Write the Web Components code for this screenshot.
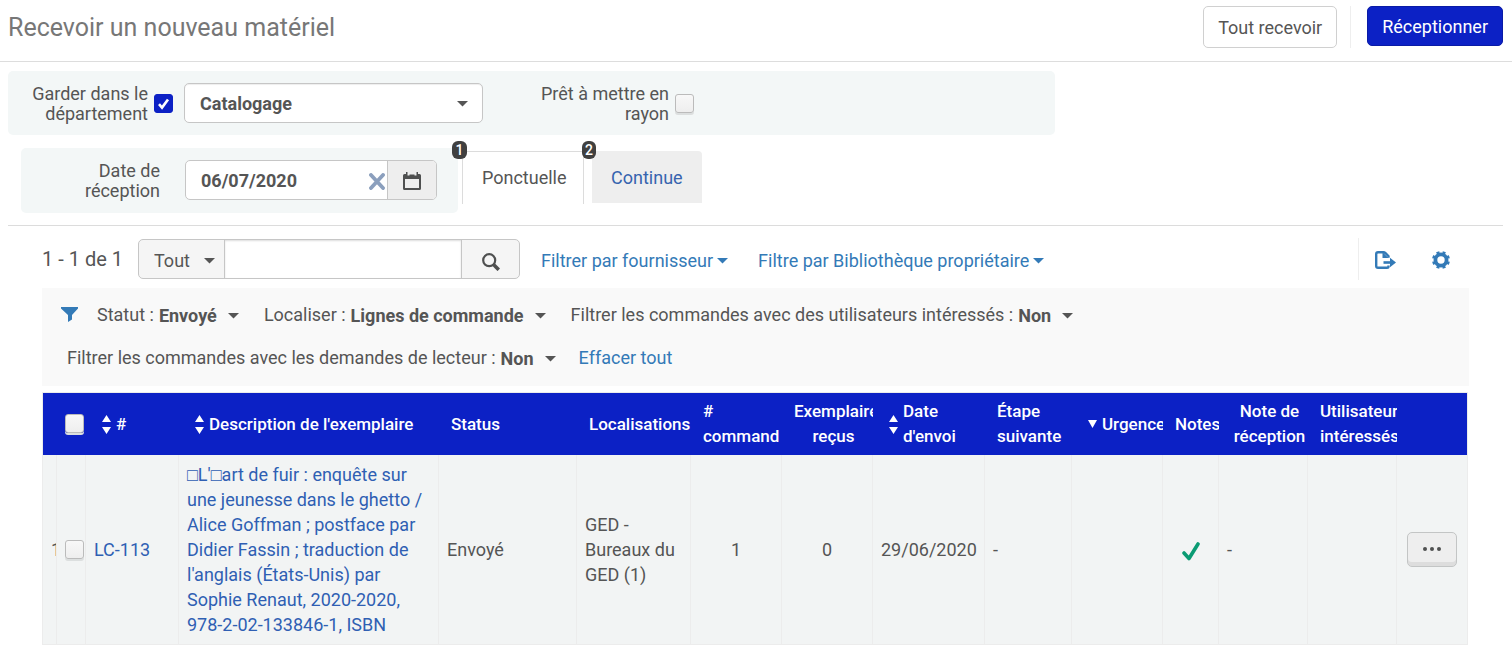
<!DOCTYPE html>
<html lang="fr">
<head>
<meta charset="utf-8">
<meta name="viewport" content="width=device-width, initial-scale=1">
<title>Recevoir un nouveau matériel</title>
<style>
  :root {
    --ink: #555;
    --blue: #0c21c5;
    --link: #337ab7;
    --row-link: #2f5fb3;
    --line: #dcdcdc;
    --field-line: #c6c6c6;
    --panel: #f3f7f7;
  }
  body {
    margin: 0;
    background: #fff;
    color: var(--ink);
    font: 400 18px/20px Roboto, "Liberation Sans", sans-serif;
  }
</style>
</head>
<body>
<receive-page></receive-page>

<script>
const base = `
  *, *::before, *::after { box-sizing: border-box; }
  button, input, select { font: inherit; color: inherit; margin: 0; }
  button, select { cursor: pointer; }
  a { color: var(--link); text-decoration: none; }
  svg { display: block; }
`;

function define(name, css, html) {
  const template = document.createElement('template');
  template.innerHTML = `<style>${base}${css}</style>${html}`;
  customElements.define(name, class extends HTMLElement {
    constructor() {
      super();
      const root = this.attachShadow({ mode: 'open' });
      root.append(template.content.cloneNode(true));
      root.querySelectorAll('[data-text]').forEach(el => {
        el.textContent = this.getAttribute(el.dataset.text) || '';
      });
      const box = root.querySelector('input[type=checkbox]');
      if (box) {
        box.checked = this.hasAttribute('checked');
        if (this.hasAttribute('name')) box.setAttribute('aria-label', this.getAttribute('name'));
      }
    }
  });
}

const checkCss = `
  input[type=checkbox] {
    appearance: none; flex: none; display: block; width: 19px; height: 19px;
    border: 1px solid #bbb; border-radius: 3px;
    background: linear-gradient(#f8f8f8, #eee);
    box-shadow: 0 2px 0 #dcdfdf;
  }
  input[type=checkbox]:checked {
    border-color: var(--blue); box-shadow: none;
    background: var(--blue) url("data:image/svg+xml,%3Csvg xmlns='http://www.w3.org/2000/svg' viewBox='0 0 17 17'%3E%3Cpath d='M4 9.2 7 12.6 13 4.4' fill='none' stroke='white' stroke-width='2.6'/%3E%3C/svg%3E") center / 17px no-repeat;
  }
`;

define('caret-down', `
  :host { display: block; flex: none; width: 11px; height: 6px; }
  svg { width: 11px; height: 6px; fill: currentColor; }
`, `<svg viewBox="0 0 11 6" aria-hidden="true"><path d="M0 0h11L5.500 5.500z"/></svg>`);

define('sort-arrows', `
  :host { display: block; flex: none; width: 9px; }
  svg { width: 9px; fill: #fff; }
  .down { display: none; }
  :host([down]) .down { display: block; }
  :host([down]) .both { display: none; }
`, `
  <svg class="both" height="19" viewBox="0 0 9 19" aria-hidden="true"><path d="M0 7 4.500 0 9 7zM0 12h9l-4.500 7z"/></svg>
  <svg class="down" height="8" viewBox="0 0 9 8" aria-hidden="true"><path d="M0 0h9L4.500 8z"/></svg>
`);

define('check-box', `:host { display: block; width: 19px; } ${checkCss}`, `<input type="checkbox">`);

define('check-field', `
  :host { display: flex; align-items: center; gap: 6px; }
  label { flex: 1; padding-top: 2px; text-align: right; }
  ${checkCss}
`, `<label for="box" data-text="label"></label><input type="checkbox" id="box">`);

define('page-header', `
  :host { display: flex; justify-content: space-between; padding: 6px 9px 11px 8px; border-bottom: 1px solid #ddd; }
  h1 { margin: 0; font-size: 25px; font-weight: 400; line-height: 44px; color: #777; }
  .actions { display: flex; align-items: flex-start; }
  button { height: 42px; padding: 2px 14px 0; border: 1px solid #d0d0d0; border-radius: 5px; background: #fff; }
  .primary { height: 40px; color: #fff; background: var(--blue); border-color: #0a1ba6; }
  .rule { width: 1px; height: 42px; margin: 0 16px 0 13px; background: #eee; }
`, `
  <h1>Recevoir un nouveau matériel</h1>
  <div class="actions">
    <button type="button">Tout recevoir</button>
    <span class="rule"></span>
    <button type="button" class="primary">Réceptionner</button>
  </div>
`);

define('department-panel', `
  :host { display: flex; align-items: center; width: 70%; height: 64px; padding-left: 20px; background: var(--panel); border-radius: 5px; }
  .keep { width: 145px; }
  .shelf { width: 155px; margin-left: 56px; }
  .pick { position: relative; width: 299px; margin-left: 11px; }
  select {
    appearance: none; display: block; width: 100%; height: 40px; padding: 2px 40px 0 15px; font-weight: 700;
    border: 1px solid var(--field-line); border-radius: 5px; background: #fff;
    box-shadow: inset 0 1px 1px #eee;
  }
  caret-down { position: absolute; right: 15px; top: 18px; pointer-events: none; }
`, `
  <check-field class="keep" label="Garder dans le département" checked></check-field>
  <div class="pick">
    <select aria-label="Département"><option>Catalogage</option></select>
    <caret-down></caret-down>
  </div>
  <check-field class="shelf" label="Prêt à mettre en rayon"></check-field>
`);

define('date-panel', `
  :host { display: flex; align-items: center; width: 437px; height: 65px; padding-bottom: 1px; background: var(--panel); border-radius: 5px; }
  label { width: 80px; margin-left: 59px; padding-top: 2px; text-align: right; }
  .group { display: flex; width: 252px; height: 40px; margin-left: 25px; border: 1px solid var(--field-line); border-radius: 5px; background: #fff; overflow: hidden; }
  input { flex: 1; min-width: 0; padding: 2px 0 0 15px; border: 0; background: none; font-weight: 700; }
  button { display: grid; place-items: center; padding: 0; border: 0; background: none; }
  .clear { width: 20px; padding-top: 2px; }
  .calendar { width: 49px; padding-top: 2px; background: #eee; border-left: 1px solid var(--field-line); }
`, `
  <label for="date">Date de réception</label>
  <div class="group">
    <input id="date" type="text" value="06/07/2020">
    <button type="button" class="clear" aria-label="Effacer la date">
      <svg width="16" height="17" viewBox="0 0 16 17"><path d="M2 2 14 15M14 2 2 15" stroke="#8b9fbd" stroke-width="3.800" stroke-linecap="round"/></svg>
    </button>
    <button type="button" class="calendar" aria-label="Choisir une date">
      <svg width="18" height="18" viewBox="0 0 18 18" fill="#4f5050"><path d="M0 3.500Q0 2 1.500 2H3V0h1.500v3.500h2V1h5v2.500h2V0H15v2h1.500Q18 2 18 3.500v13q0 1.500-1.500 1.500h-15Q0 18 0 16.500zM2 7v9h14V7z"/><path d="M6 0h6v2.500H6z" fill="#eee"/></svg>
    </button>
  </div>
`);

define('mode-tabs', `
  :host { display: flex; align-items: flex-start; gap: 8px; }
  a { position: relative; display: flex; align-items: center; height: 53px; padding: 0 19px; }
  .current { width: 122px; color: var(--ink); border: 1px solid var(--line); border-bottom: 0; }
  .other { height: 52px; padding-top: 2px; background: #eee; border-radius: 4px 4px 0 0; color: #3764ae; }
  .badge { position: absolute; left: -10px; top: -10px; width: 14px; height: 18px; border-radius: 6px; background: #404040; color: #fff; font-size: 14px; font-weight: 500; line-height: 18px; text-align: center; }
  .current .badge { width: 15px; left: -11px; top: -11px; }
`, `
  <a class="current" href="#ponctuelle"><span class="badge">1</span>Ponctuelle</a>
  <a class="other" href="#continue"><span class="badge">2</span>Continue</a>
`);

define('list-toolbar', `
  :host { display: flex; align-items: center; }
  .count { font-size: 20px; width: 96px; }
  .search { display: flex; width: 382px; height: 40px; border: 1px solid var(--field-line); border-radius: 5px; overflow: hidden; background: #f5f5f5; }
  .scope { position: relative; width: 86px; border-right: 1px solid var(--field-line); }
  select { appearance: none; width: 100%; height: 100%; padding: 4px 0 0 15px; border: 0; background: none; }
  .scope caret-down { position: absolute; right: 9px; top: 18px; pointer-events: none; }
  input { flex: 1; min-width: 0; border: 0; background: #fff; box-shadow: inset 0 1px 2px #ddd; }
  .go { display: grid; place-items: center; width: 58px; padding: 5px 0 0; border: 0; border-left: 1px solid var(--field-line); background: none; }
  .menu { display: flex; align-items: center; gap: 4px; margin-left: 21px; padding-top: 3px; }
  .menu + .menu { margin-left: 31px; }
  .menu caret-down { width: 10px; }
  .tools { display: flex; align-items: center; height: 42px; margin-left: auto; padding: 2px 0 0 16px; border-left: 1px solid #eee; }
  .tools a { margin-right: 19px; }
  .tools a:first-child { margin-right: 36px; }
`, `
  <span class="count">1 - 1 de 1</span>
  <div class="search">
    <div class="scope"><select aria-label="Champ de recherche"><option>Tout</option></select><caret-down></caret-down></div>
    <input type="text" aria-label="Rechercher">
    <button type="button" class="go" aria-label="Lancer la recherche">
      <svg width="18" height="18" viewBox="0 0 18 18" fill="none" stroke="#4f5050"><circle cx="7.200" cy="7.200" r="6" stroke-width="2.200"/><path d="m11.500 11.500 5.300 5.300" stroke-width="3.600"/></svg>
    </button>
  </div>
  <a class="menu" href="#fournisseur">Filtrer par fournisseur<caret-down></caret-down></a>
  <a class="menu" href="#bibliotheque">Filtre par Bibliothèque propriétaire<caret-down></caret-down></a>
  <div class="tools">
    <a href="#exporter" aria-label="Exporter">
      <svg width="21" height="18" viewBox="0 0 21 18" fill="none" stroke="#337ab7"><path d="M13.500 14.500v1q0 1.300-1.500 1.300H3Q1.200 16.800 1.200 15V3Q1.200 1.200 3 1.200h5.500q1 0 2 1l3 3v1.500" stroke-width="2.400"/><path d="M7.500 1v6h6z" fill="#337ab7" stroke="none"/><path d="M8.500 11.500h8" stroke-width="2.600"/><path d="m15 6.800 6 4.700-6 4.700z" fill="#337ab7" stroke="none"/></svg>
    </a>
    <a href="#parametres" aria-label="Paramètres">
      <svg width="18" height="18" viewBox="-9 -9 18 18" fill="none" stroke="#337ab7"><circle r="5.600" stroke-width="3.800"/><circle r="7.500" stroke-width="3" pathLength="16" stroke-dasharray="1 1" stroke-dashoffset=".5" transform="rotate(22.500)"/></svg>
    </a>
  </div>
`);

define('filter-choice', `
  :host { display: flex; align-items: center; height: 43px; padding: 0 6px; }
  .pick { position: relative; margin-left: 5px; }
  select { appearance: none; display: block; padding: 2px 22px 0 0; border: 0; background: none; font-weight: 700; }
  caret-down { position: absolute; right: 0; top: 9px; pointer-events: none; }
`, `
  <label for="pick" data-text="label"></label>
  <div class="pick"><select id="pick"><option data-text="value"></option></select><caret-down></caret-down></div>
`);

define('filter-bar', `
  :host { display: flex; flex-wrap: wrap; align-items: center; column-gap: 13px; padding: 5px 19px 7px; background: #f9f9f9; }
  .clear { padding-left: 4px; }
`, `
  <svg width="17" height="15" viewBox="0 0 17 15" fill="#337ab7" aria-hidden="true"><path d="M0 0h17v1.500L11 8v4.500L7 15V8L0 1.500z"/></svg>
  <filter-choice label="Statut :" value="Envoyé"></filter-choice>
  <filter-choice label="Localiser :" value="Lignes de commande"></filter-choice>
  <filter-choice label="Filtrer les commandes avec des utilisateurs intéressés :" value="Non"></filter-choice>
  <filter-choice label="Filtrer les commandes avec les demandes de lecteur :" value="Non"></filter-choice>
  <a class="clear" href="#effacer">Effacer tout</a>
`);

define('items-table', `
  :host { display: block; }
  table { width: 100%; table-layout: fixed; border-collapse: separate; border-spacing: 0; line-height: 25px; border: 1px solid #ececec; border-right: 0; border-bottom: 0; }
  th, td { overflow: hidden; vertical-align: middle; text-align: left; }
  th { height: 62px; padding: 0 0 0 12px; background: var(--blue); color: #fff; font-size: 17px; font-weight: 500; }
  th:last-child { border-right: 1px solid #ececec; }
  th.tick { padding-left: 8px; }
  th > div { display: flex; align-items: center; gap: 5px; margin-left: 4px; white-space: nowrap; }
  th check-box { margin-bottom: 1px; }
  th check-box { filter: none; }
  td { height: 190px; padding: 7px 8px 7px; background: #f2f4f4; border-right: 1px solid #ececec; border-bottom: 1px solid #ececec; }
  td.num { padding-right: 0; }
  td a { color: var(--row-link); }
  .mid { text-align: center; }
  td svg { margin: 4px auto 0; }
  .more { display: grid; place-items: center; width: 50px; height: 35px; margin-left: 2px; padding: 0 0 1px; border: 1px solid #c3c5c5; border-radius: 5px; background: #eee; box-shadow: inset 0 -4px 0 #ddd; }
  .more svg { margin: 0; }
`, `
  <table>
    <colgroup>
      <col style="width:14px"><col style="width:29px"><col style="width:93px"><col style="width:260px">
      <col style="width:138px"><col style="width:114px"><col style="width:91px"><col style="width:91px">
      <col style="width:112px"><col style="width:87px"><col style="width:91px"><col style="width:56px">
      <col style="width:89px"><col style="width:89px"><col style="width:71px">
    </colgroup>
    <thead>
      <tr>
        <th></th>
        <th class="tick"><check-box name="Tout sélectionner"></check-box></th>
        <th><div><sort-arrows></sort-arrows>#</div></th>
        <th><div><sort-arrows></sort-arrows>Description de l'exemplaire</div></th>
        <th>Status</th>
        <th>Localisations</th>
        <th># command</th>
        <th class="mid">Exemplaires reçus</th>
        <th><div><sort-arrows></sort-arrows><span>Date<br>d'envoi</span></div></th>
        <th>Étape suivante</th>
        <th><div><sort-arrows down></sort-arrows>Urgence</div></th>
        <th>Notes</th>
        <th class="mid">Note de réception</th>
        <th>Utilisateurs intéressés</th>
        <th></th>
      </tr>
    </thead>
    <tbody>
      <tr>
        <td class="num">1</td>
        <td><check-box name="Sélectionner LC-113"></check-box></td>
        <td><a href="#LC-113">LC-113</a></td>
        <td><a href="#exemplaire">□L'□art de fuir : enquête sur une jeunesse dans le ghetto / Alice Goffman ; postface par Didier Fassin ; traduction de l'anglais (États-Unis) par Sophie Renaut, 2020-2020, 978-2-02-133846-1, ISBN</a></td>
        <td>Envoyé</td>
        <td>GED - Bureaux du GED (1)</td>
        <td class="mid">1</td>
        <td class="mid">0</td>
        <td>29/06/2020</td>
        <td>-</td>
        <td></td>
        <td><svg width="18" height="19" viewBox="0 0 18 19" role="img" aria-label="Oui"><path d="M2 11 7 16.500 16 2" fill="none" stroke="#0b9b73" stroke-width="3.600" stroke-linecap="round" stroke-linejoin="round"/></svg></td>
        <td>-</td>
        <td></td>
        <td><button type="button" class="more" aria-label="Actions"><svg width="18" height="4" viewBox="0 0 18 4" fill="#4f5050"><circle cx="2" cy="2" r="2"/><circle cx="9" cy="2" r="2"/><circle cx="16" cy="2" r="2"/></svg></button></td>
      </tr>
    </tbody>
  </table>
`);

define('receive-page', `
  :host { display: block; }
  .settings { padding: 9px 0 12px; margin: 0 9px 0 8px; border-bottom: 1px solid var(--line); }
  .when { display: flex; gap: 4px; margin: 13px 0 0 13px; }
  mode-tabs { margin-top: 3px; }
  .list { padding: 12px 43px 28px 42px; }
  filter-bar { margin: 8px 0 6px; }
  items-table { margin-right: 1px; }
`, `
  <page-header></page-header>
  <main>
    <section class="settings">
      <department-panel></department-panel>
      <div class="when"><date-panel></date-panel><mode-tabs></mode-tabs></div>
    </section>
    <section class="list">
      <list-toolbar></list-toolbar>
      <filter-bar></filter-bar>
      <items-table></items-table>
    </section>
  </main>
`);
</script>
</body>
</html>
